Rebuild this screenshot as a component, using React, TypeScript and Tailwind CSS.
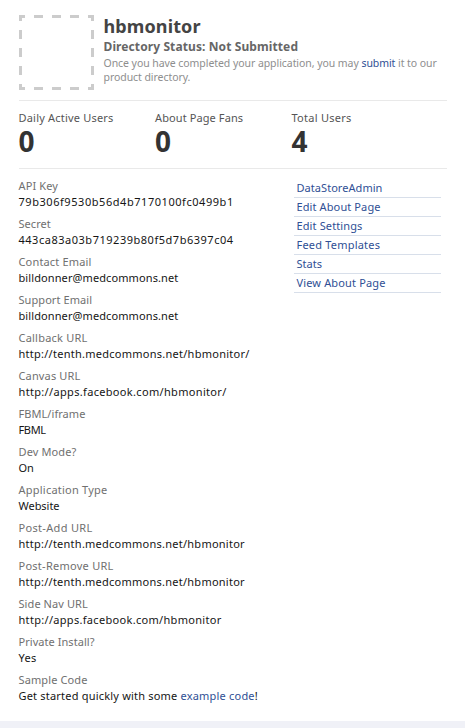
type Field = { label: string; value: string; labelClass: string; valueClass: string };

const fields: Field[] = [
  { label: "API Key", value: "79b306f9530b56d4b7170100fc0499b1", labelClass: "tracking-[0.12px]", valueClass: "tracking-[0.55px]" },
  { label: "Secret", value: "443ca83a03b719239b80f5d7b6397c04", labelClass: "tracking-[0.05px]", valueClass: "tracking-[0.52px]" },
  { label: "Contact Email", value: "billdonner@medcommons.net", labelClass: "tracking-[0.16px]", valueClass: "tracking-[0.1px]" },
  { label: "Support Email", value: "billdonner@medcommons.net", labelClass: "tracking-[0.07px]", valueClass: "tracking-[0.1px]" },
  { label: "Callback URL", value: "http://tenth.medcommons.net/hbmonitor/", labelClass: "tracking-[0.22px]", valueClass: "tracking-[0.26px]" },
  { label: "Canvas URL", value: "http://apps.facebook.com/hbmonitor/", labelClass: "tracking-[0.15px]", valueClass: "tracking-[0.33px]" },
  { label: "FBML/iframe", value: "FBML", labelClass: "tracking-[0.06px]", valueClass: "tracking-[-0.35px]" },
  { label: "Dev Mode?", value: "On", labelClass: "tracking-[0.13px]", valueClass: "tracking-[-0.19px]" },
  { label: "Application Type", value: "Website", labelClass: "tracking-[0.23px]", valueClass: "tracking-[-0.04px]" },
  { label: "Post-Add URL", value: "http://tenth.medcommons.net/hbmonitor", labelClass: "tracking-[0.32px]", valueClass: "tracking-[0.25px]" },
  { label: "Post-Remove URL", value: "http://tenth.medcommons.net/hbmonitor", labelClass: "tracking-[0.26px]", valueClass: "tracking-[0.25px]" },
  { label: "Side Nav URL", value: "http://apps.facebook.com/hbmonitor", labelClass: "tracking-[0.08px]", valueClass: "tracking-[0.31px]" },
  { label: "Private Install?", value: "Yes", labelClass: "tracking-[0.05px]", valueClass: "tracking-[0.28px]" },
];

const links = [
  { text: "DataStoreAdmin", className: "tracking-[0.05px]" },
  { text: "Edit About Page", className: "tracking-[0.11px]" },
  { text: "Edit Settings", className: "tracking-[0.12px]" },
  { text: "Feed Templates", className: "tracking-[0.2px]" },
  { text: "Stats", className: "tracking-[0px]" },
  { text: "View About Page", className: "tracking-[0.15px]" },
];

const stats = [
  { label: "Daily Active Users", value: "0", className: "tracking-[0.2px]" },
  { label: "About Page Fans", value: "0", className: "tracking-[0.1px]" },
  { label: "Total Users", value: "4", className: "tracking-[0.26px]" },
];

function EmptyLogo() {
  return (
    <svg width="75" height="75" viewBox="0 0 75 75" className="shrink-0" stroke="#cccccc" strokeWidth="3" strokeDasharray="9 9" strokeDashoffset="3">
      <path d="M0 1.5H75" />
      <path d="M0 73.5H75" />
      <path d="M1.5 0V75" />
      <path d="M73.5 0V75" />
    </svg>
  );
}

function Header() {
  return (
    <header className="flex h-[86px] gap-[9.5px] pt-px">
      <EmptyLogo />
      <div className="-mt-px">
        <h1 className="text-[18px] leading-6 font-bold tracking-[0.12px] text-[#444444]">hbmonitor</h1>
        <h2 className="mt-px text-[12px] leading-4 font-bold tracking-[0.1px] text-[#666666]">Directory Status: Not Submitted</h2>
        <p className="mt-px text-[10.5px] leading-[14px] tracking-[-0.06px] whitespace-nowrap text-[#8e8e8e]">
          Once you have completed your application, you may{" "}
          <a className="text-[#2f4f95]">submit</a> it to our
          <br />
          product directory.
        </p>
      </div>
    </header>
  );
}

export default function App() {
  return (
    <div className="flex h-[728px] w-[465px] flex-col overflow-hidden bg-white font-['Noto_Sans',sans-serif] text-[11px] leading-4">
      <main className="h-[721px] shrink-0 pt-[14px] pr-[18px] pl-[19px]">
        <Header />
        <section className="h-[69px] border-y border-[#e9e9e9] pt-[9px]">
          <div className="-ml-[0.5px] grid grid-cols-[136.5px_136.5px_1fr]">
            {stats.map((s) => (
              <div key={s.label}>
                <div className={`text-[#555555] ${s.className}`}>{s.label}</div>
                <div className="text-[28px] leading-[30px] font-bold text-[#333333]">{s.value}</div>
              </div>
            ))}
          </div>
        </section>
        <div className="flex pt-[9px]">
          <dl className="-ml-[0.5px] flex w-[275.5px] flex-col gap-[6px]">
            {fields.map((f) => (
              <div key={f.label}>
                <dt className={`text-[#707070] ${f.labelClass}`}>{f.label}</dt>
                <dd className={`text-[#151515] ${f.valueClass}`}>{f.value}</dd>
              </div>
            ))}
            <div>
              <dt className="tracking-[0.12px] text-[#707070]">Sample Code</dt>
              <dd className="tracking-[0.2px] text-[#151515]">
                Get started quickly with some <a className="text-[#2f4f95]">example code</a>!
              </dd>
            </div>
          </dl>
          <nav className="w-[147px] pt-px">
            {links.map((l) => (
              <a key={l.text} className={`block h-[19px] border-b border-[#d8dfea] pl-[2.5px] leading-[18px] text-[#2f4f95] ${l.className}`}>
                {l.text}
              </a>
            ))}
          </nav>
        </div>
      </main>
      <footer className="h-[7px] bg-[#f0f1f7]" />
    </div>
  );
}
